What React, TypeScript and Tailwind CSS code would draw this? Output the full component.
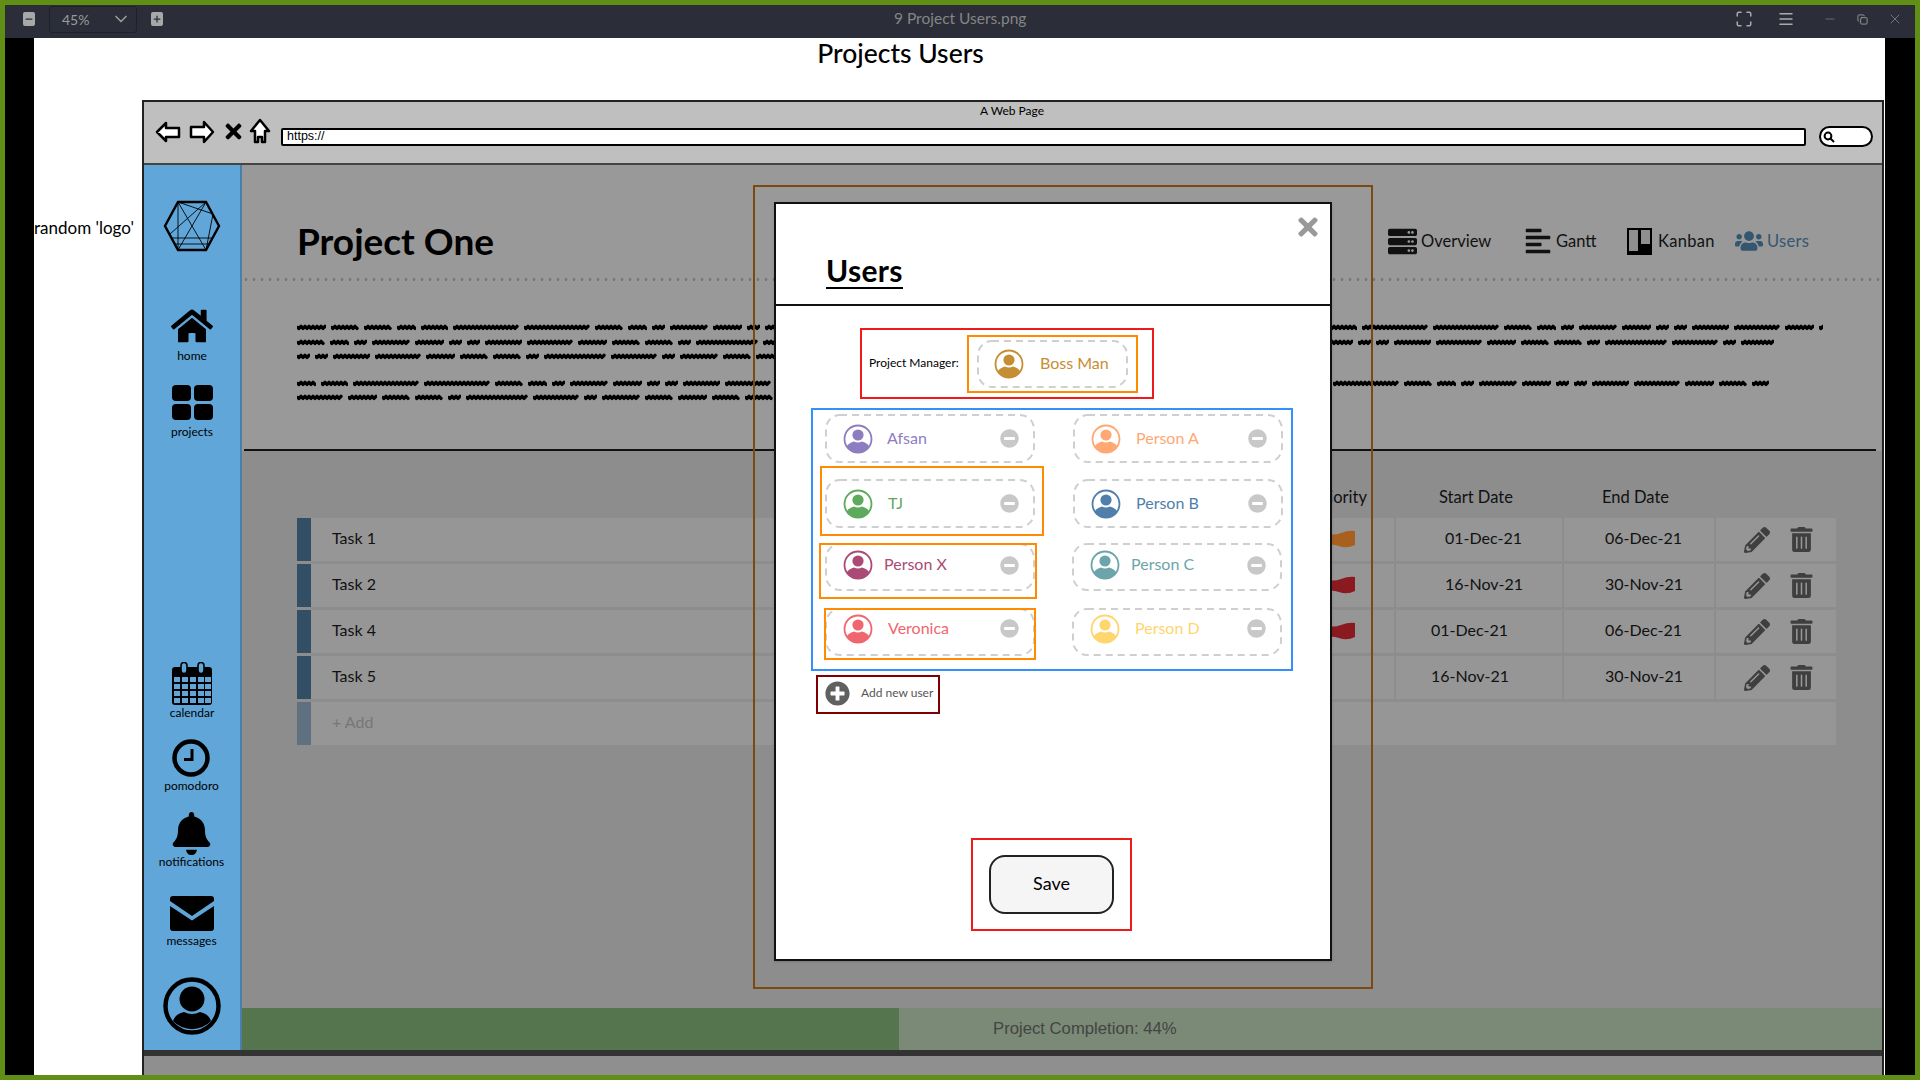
import { FaBell, FaHome, FaMinusCircle, FaPencilAlt, FaPlusCircle, FaTimes, FaTrashAlt, FaUsers, FaAlignLeft, FaServer } from "react-icons/fa";
import { ChevronDown, Copy, Maximize, Menu, Minus, Plus, X } from "lucide-react";

const font = "font-['Lato','Open_Sans',sans-serif]";

const wordWidths = [29, 28, 28, 19, 27, 66, 66, 28, 19, 13, 38, 29, 13, 13, 37, 46, 29, 28, 28, 13, 62, 46, 13, 38, 28];

function Scribble({ width }: { width: number }) {
  let d = "M1 3.5";
  for (let x = 2; x < width; x += 2) {
    d += ` L${x} ${x % 4 === 0 ? 2.4 : 4.4}`;
  }
  return (
    <svg width={width} height={7} className="shrink-0">
      <path d={d} fill="none" stroke="#000" strokeWidth={3.4} strokeLinejoin="round" strokeLinecap="round" />
    </svg>
  );
}

function GreekLine({ width, seed }: { width: number; seed: number }) {
  const words: number[] = [];
  let used = 0;
  let i = seed;
  while (used < width) {
    const w = Math.min(wordWidths[i % wordWidths.length], Math.max(width - used, 6));
    words.push(w);
    used += w + 5;
    i += 1;
  }
  return (
    <div className="flex h-[7px] gap-[5px] overflow-hidden" style={{ width }}>
      {words.map((w, n) => (
        <Scribble key={n} width={w} />
      ))}
    </div>
  );
}

function Avatar({ color }: { color: string }) {
  return (
    <svg width="30" height="30" viewBox="0 0 30 30" className="shrink-0" style={{ color }}>
      <circle cx="15" cy="15" r="13.5" fill="none" stroke="currentColor" strokeWidth="1.8" />
      <circle cx="15" cy="11" r="5.6" fill="currentColor" />
      <path d="M3.5 23 Q5 19 11 17.4 Q15 19.6 19 17.4 Q25 19 26.5 23 A14 14 0 0 1 3.5 23Z" fill="currentColor" />
    </svg>
  );
}

// the sketchy dashed outline of a user card
function DashedBox({ w, h }: { w: number; h: number }) {
  return (
    <svg width={w} height={h} className="absolute top-0 left-0" fill="none">
      <rect x="1" y="1" width={w - 2} height={h - 2} rx="14" stroke="#cfcfcf" strokeWidth="2" strokeDasharray="7 5" />
    </svg>
  );
}

type Person = {
  name: string;
  color: string;
  textClass: string;
  outline?: string;
};

const rows: { mt: string; gap: string; h: number; shift: string; left: Person; right: Person }[] = [
  {
    mt: "mt-[4px]",
    gap: "gap-x-[38px]",
    h: 49,
    shift: "",
    left: { name: "Afsan", color: "#8e7cc3", textClass: "ml-[14px]" },
    right: { name: "Person A", color: "#ffa873", textClass: "ml-[15px]" },
  },
  {
    mt: "mt-[16px]",
    gap: "gap-x-[38px]",
    h: 49,
    shift: "",
    left: {
      name: "TJ",
      color: "#5daa5d",
      textClass: "ml-[15px]",
      outline: "left-[-5px] top-[-13px] w-[224px] h-[70px]",
    },
    right: { name: "Person B", color: "#4f7faa", textClass: "ml-[15px]" },
  },
  {
    mt: "mt-[15px]",
    gap: "gap-x-[37px]",
    h: 48,
    shift: "pb-[4px]",
    left: {
      name: "Person X",
      color: "#ab4a75",
      textClass: "ml-[11px]",
      outline: "left-[-6px] top-0 w-[218px] h-[56px]",
    },
    right: { name: "Person C", color: "#6ba5ab", textClass: "ml-[11px]" },
  },
  {
    mt: "mt-[17px]",
    gap: "gap-x-[37px]",
    h: 48,
    shift: "pb-[7px]",
    left: {
      name: "Veronica",
      color: "#f0666e",
      textClass: "ml-[15px]",
      outline: "left-[-1px] top-0 w-[212px] h-[52px]",
    },
    right: { name: "Person D", color: "#ffd56e", textClass: "ml-[15px]" },
  },
];

function UserCard({ person, h, shift }: { person: Person; h: number; shift: string }) {
  return (
    <div className={`relative flex w-[210px] items-center pr-[16px] pl-[18px] ${shift}`} style={{ height: h }}>
      <DashedBox w={210} h={h} />
      <Avatar color={person.color} />
      <span className={`pb-[2px] text-[16px] ${person.textClass}`} style={{ color: person.color }}>
        {person.name}
      </span>
      <FaMinusCircle className="ml-auto text-[19px] text-[#c8c8c8]" />
      {person.outline && <div className={`absolute border-[2px] border-[#ff8c00] ${person.outline}`} />}
    </div>
  );
}

const tasks = [
  { name: "Task 1", flag: "#a8601f", start: "01-Dec-21", startMl: "ml-[49px]", end: "06-Dec-21" },
  { name: "Task 2", flag: "#8a1a20", start: "16-Nov-21", startMl: "ml-[49px]", end: "30-Nov-21" },
  { name: "Task 4", flag: "#8a1a20", start: "01-Dec-21", startMl: "ml-[35px]", end: "06-Dec-21" },
  { name: "Task 5", flag: "", start: "16-Nov-21", startMl: "ml-[35px]", end: "30-Nov-21" },
];

function Flag({ color }: { color: string }) {
  return (
    <svg width="46" height="20" viewBox="0 0 46 20" fill={color}>
      <path d="M0 4 Q8 0 16 3 T32 3 T46 1 V15 Q38 19 30 16 T14 16 T0 18Z" />
    </svg>
  );
}

function Sidebar() {
  return (
    <aside className="flex w-[98px] shrink-0 flex-col items-center border-r-2 border-[#4a80a8] bg-[#61a6d9] text-black">
      <svg width="58" height="52" viewBox="0 0 58 52" className="mt-[35px]" fill="none" stroke="#000">
        <path d="M15 2 H43 L56 26 L43 50 H15 L2 26Z" strokeWidth="2.4" />
        <path d="M15 2 L43 50 M43 2 L15 50 M15 2 L50 14 M43 2 L7 34 M15 2 V50 M50 14 L43 50 M8 38 H50 M12 44 H46" strokeWidth="0.9" />
      </svg>
      <FaHome className="mt-[53px] text-[42px]" />
      <span className="mt-[1px] text-[12px] leading-[16px]">home</span>
      <div className="mt-[21px] grid grid-cols-2 gap-[3px]">
        {[0, 1, 2, 3].map((n) => (
          <div key={n} className="h-[16px] w-[19px] rounded-[4px] bg-black" />
        ))}
      </div>
      <span className="mt-[4px] text-[12px] leading-[16px]">projects</span>
      <svg width="42" height="44" viewBox="0 0 42 44" className="mt-[222px]">
        <rect x="1" y="5" width="40" height="38" rx="3" fill="#000" />
        <rect x="10" y="0.5" width="6" height="11" rx="3" fill="#61a6d9" stroke="#000" strokeWidth="1.6" />
        <rect x="27" y="0.5" width="6" height="11" rx="3" fill="#61a6d9" stroke="#000" strokeWidth="1.6" />
        {[15, 22, 29, 36].map((y) =>
          [3, 11, 19, 27, 34].map((x) => (
            <rect key={`${x}-${y}`} x={x} y={y} width="6" height="5" fill="#61a6d9" />
          )),
        )}
      </svg>
      <span className="mt-[-1px] text-[12px] leading-[16px]">calendar</span>
      <svg width="38" height="38" viewBox="0 0 38 38" className="mt-[18px] mr-[2px]" fill="none" stroke="#000">
        <circle cx="19" cy="19" r="16.5" strokeWidth="4.5" />
        <path d="M20 10 V20.5 H12" strokeWidth="3" />
      </svg>
      <span className="mt-[1px] mr-[1px] text-[12px] leading-[16px]">pomodoro</span>
      <FaBell className="mt-[18px] mr-[1px] text-[43px]" />
      <span className="mt-[-1px] mr-[1px] text-[12px] leading-[16px]">notifications</span>
      <svg width="44" height="35" viewBox="0 0 44 35" className="mt-[26px] mr-[1px]">
        <path d="M3 0 H41 Q44 0 44 3 V5 L22 20 L0 5 V3 Q0 0 3 0Z" fill="#000" />
        <path d="M0 10 L22 24.5 L44 10 V32 Q44 35 41 35 H3 Q0 35 0 32Z" fill="#000" />
      </svg>
      <span className="mt-[2px] mr-[1px] text-[12px] leading-[16px]">messages</span>
      <svg width="58" height="58" viewBox="0 0 58 58" className="mt-[28px] mr-[1px]">
        <circle cx="29" cy="29" r="26.5" fill="none" stroke="#000" strokeWidth="4.5" />
        <circle cx="29" cy="22" r="12.5" fill="#000" />
        <path d="M10 44 Q12 37 21 35 Q29 39 37 35 Q46 37 48 44 A26 26 0 0 1 10 44Z" fill="#000" />
      </svg>
    </aside>
  );
}

function Nav() {
  return (
    <nav className="flex items-center pr-[72px] text-[16.5px] whitespace-nowrap text-[#111]">
      <FaServer className="text-[29px]" />
      <span className="ml-[4px] w-[67px]">Overview</span>
      <FaAlignLeft className="ml-[36px] text-[28px]" />
      <span className="ml-[4px] w-[40px]">Gantt</span>
      <svg width="25" height="27" viewBox="0 0 25 27" className="ml-[31px]">
        <rect width="25" height="27" fill="#000" />
        <rect x="2" y="2" width="9" height="21" fill="#8f8f8f" />
        <rect x="14" y="2" width="9" height="14" fill="#8f8f8f" />
      </svg>
      <span className="ml-[6px] w-[55px] tracking-[0.3px]">Kanban</span>
      <FaUsers className="ml-[22px] text-[28px] text-[#35566f]" />
      <span className="ml-[4px] w-[43px] tracking-[0.3px] text-[#35566f]">Users</span>
    </nav>
  );
}

function TaskTable() {
  return (
    <div className="flex flex-1 flex-col bg-[#8d8d8d] pr-[46px] pl-[55px]">
      <div className="mt-[34px] flex h-[24px] items-center text-[16.5px] leading-none whitespace-nowrap text-[#111]">
        <span className="ml-auto w-[71px] text-right">Priority</span>
        <span className="ml-[29px] w-[125px] pl-[43px]">Start Date</span>
        <span className="ml-[43px] w-[272px] pl-[38px]">End Date</span>
      </div>
      <div className="mt-[9px] flex flex-col gap-[3px] text-[16px] text-[#111]">
        {tasks.map((t) => (
          <div key={t.name} className="flex h-[43px] items-stretch gap-[2px]">
            <div className="flex flex-1 items-center bg-[#969696]">
              <div className="h-[43px] w-[14px] bg-[#324f66]" />
              <span className="ml-[21px] pb-[4px]">{t.name}</span>
              <div className="ml-auto flex w-[85px]">{t.flag && <Flag color={t.flag} />}</div>
            </div>
            <div className="flex w-[166px] items-center bg-[#969696] pb-[4px]">
              <span className={t.startMl}>{t.start}</span>
            </div>
            <div className="flex w-[150px] items-center bg-[#969696] pb-[4px]">
              <span className="ml-[41px]">{t.end}</span>
            </div>
            <div className="flex w-[120px] items-center bg-[#969696] text-[#3f3f3f]">
              <FaPencilAlt className="ml-[28px] text-[26px]" />
              <FaTrashAlt className="ml-[19px] text-[25px]" />
            </div>
          </div>
        ))}
        <div className="flex h-[43px] items-center bg-[#969696]">
          <div className="h-full w-[14px] bg-[#5f7080]" />
          <span className="ml-[21px] pb-[3px] text-[#777]">+ Add</span>
        </div>
      </div>
      <div className="flex-1" />
    </div>
  );
}

function UsersModal() {
  return (
    <div className="absolute top-[185px] left-[753px] h-[804px] w-[620px] border-2 border-[#7a4a10] pt-[15px] pl-[19px]">
      <div className="relative h-[759px] w-[558px] border-2 border-[#111] bg-white text-black shadow-sm">
        <FaTimes className="absolute top-[9px] right-[8px] text-[28px] text-[#999]" />
        <div className="h-[102px] border-b-2 border-[#111] pt-[49px] pl-[50px]">
          <h2 className="inline-block border-b-2 border-black text-[30px] leading-[34px] font-bold tracking-[0.3px]">Users</h2>
        </div>
        <div className="mt-[22px] ml-[84px] flex h-[71px] w-[294px] items-center border-2 border-[#f01a1a] pl-[7px]">
          <span className="w-[98px] pb-[2px] text-[12px] whitespace-nowrap">Project Manager:</span>
          <div className="flex h-[58px] w-[171px] items-center border-2 border-[#ff8c00] px-[8px]">
            <div className="relative flex h-[48px] w-[151px] items-center pl-[17px]">
              <DashedBox w={151} h={48} />
              <Avatar color="#c68e32" />
              <span className="ml-[16px] pb-[2px] text-[16px] text-[#c68e32]">Boss Man</span>
            </div>
          </div>
        </div>
        <div className="mt-[9px] ml-[35px] h-[263px] w-[482px] border-2 border-[#3390ff] pl-[12px]">
          {rows.map((row) => (
            <div key={row.left.name} className={`flex ${row.mt} ${row.gap}`}>
              <UserCard person={row.left} h={row.h} shift={row.shift} />
              <UserCard person={row.right} h={row.h} shift={row.shift} />
            </div>
          ))}
        </div>
        <div className="mt-[4px] ml-[40px] flex h-[39px] w-[124px] items-center border-2 border-[#7f0000] pb-[2px] pl-[7px]">
          <FaPlusCircle className="text-[25px] text-[#606060]" />
          <span className="ml-[11px] pb-[1px] text-[12px] whitespace-nowrap text-[#555]">Add new user</span>
        </div>
        <div className="mt-[124px] ml-[195px] flex h-[93px] w-[161px] items-center justify-center border-2 border-[#f01a1a]">
          <button className="h-[59px] w-[125px] rounded-[16px] border-2 border-[#222] bg-[#f5f5f5] pb-[2px] text-[18px]">Save</button>
        </div>
      </div>
    </div>
  );
}

export default function App() {
  return (
    <div className={`relative flex h-[1080px] w-[1920px] flex-col overflow-hidden bg-[#618e14] px-[5px] pt-[5px] pb-[5px] ${font}`}>
      <header className="flex h-[33px] shrink-0 items-center bg-[#2b2e38] pb-[5px] text-[#9a9a9a]">
        <div className="ml-[18px] flex h-[14px] w-[12px] items-center justify-center rounded-[2px] bg-[#a8a8a8]">
          <Minus size={10} strokeWidth={3} className="text-[#2b2e38]" />
        </div>
        <div className="ml-[14px] flex h-[27px] w-[88px] items-center rounded-[3px] border border-[#1f2129] pl-[12px] text-[14px]">
          45%
          <ChevronDown size={20} className="mr-[5px] ml-auto" />
        </div>
        <div className="ml-[14px] flex h-[14px] w-[12px] items-center justify-center rounded-[2px] bg-[#a8a8a8]">
          <Plus size={10} strokeWidth={3} className="text-[#2b2e38]" />
        </div>
        <span className="ml-[731px] text-[15.5px] text-[#858585]">9 Project Users.png</span>
        <Maximize size={18} className="ml-[709px] text-[#aaa]" />
        <Menu size={18} className="ml-[24px] text-[#aaa]" />
        <Minus size={14} strokeWidth={1} className="ml-[28px]" />
        <Copy size={11} className="ml-[20px]" />
        <X size={16} strokeWidth={1} className="ml-[19px]" />
      </header>

      <div className="flex min-h-0 flex-1 bg-black pr-[30px] pl-[29px]">
        <div className="flex min-w-0 flex-1 flex-col bg-white">
          <h1 className="h-[62px] pr-[118px] text-center text-[26.5px] leading-[30px] font-medium text-black">Projects Users</h1>
          <div className="flex min-h-0 flex-1">
            <div className="w-[108px] shrink-0 pt-[115px] text-[17px] whitespace-nowrap text-black">random 'logo'</div>
            <div className="flex min-w-0 flex-1 flex-col border-x-2 border-t-2 border-[#222]">
              <div className="relative flex h-[63px] shrink-0 items-center border-b-2 border-[#444] bg-[#bfbfbf] pl-[11px]">
                <span className="absolute top-0 left-[836px] text-[12px] text-black">A Web Page</span>
                <svg width="26" height="22" viewBox="0 0 26 22" className="mt-[-2px]" fill="#fff" stroke="#000" strokeWidth="2.5" strokeLinejoin="round">
                  <path d="M2 11 L11 2 V7 H24 V16 H11 V20Z" />
                </svg>
                <svg width="26" height="24" viewBox="0 0 26 24" className="mt-[-2px] ml-[8px]" fill="#fff" stroke="#000" strokeWidth="2.5" strokeLinejoin="round">
                  <path d="M24 12 L15 2 V7 H2 V17 H15 V22Z" />
                </svg>
                <FaTimes className="mt-[-3px] ml-[7px] text-[23px] text-black" />
                <svg width="22" height="26" viewBox="0 0 22 26" className="mt-[-4px] ml-[4px]" fill="#fff" stroke="#000" strokeWidth="2.5" strokeLinejoin="round">
                  <path d="M11 2 L20 13 H16 V24 H13 V19 H9 V24 H6 V13 H2Z" />
                </svg>
                <div className="mt-[8px] ml-[10px] flex h-[18px] w-[1525px] items-center rounded-[2px] border-2 border-black bg-white pl-[4px] font-['Liberation_Sans'] text-[12.5px] text-black">
                  https://
                </div>
                <div className="mt-[8px] ml-[13px] flex h-[21px] w-[54px] items-center rounded-full border-2 border-black bg-white pl-[2px]">
                  <svg width="12" height="12" viewBox="0 0 12 12" fill="none" stroke="#000" strokeWidth="2">
                    <circle cx="5" cy="5" r="3.4" />
                    <path d="M7.5 7.5 L11 11" />
                  </svg>
                </div>
              </div>

              <div className="flex min-h-0 flex-1">
                <Sidebar />
                <main className="flex min-w-0 flex-1 flex-col">
                  <div className="flex h-[286px] shrink-0 flex-col bg-[#999]">
                    <div className="flex h-[113px] items-center justify-between pt-[39px]">
                      <h2 className="ml-[55px] text-[37px] font-bold text-black">Project One</h2>
                      <Nav />
                    </div>
                    <div className="h-[3px] bg-[radial-gradient(circle,#777_1.3px,transparent_1.6px)] bg-[length:8px_3px]" />
                    <div className="mt-[43px] ml-[55px] flex flex-col gap-[7.5px]">
                      <GreekLine width={1526} seed={0} />
                      <GreekLine width={1477} seed={7} />
                      <GreekLine width={700} seed={12} />
                      <div className="mt-[12px]">
                        <GreekLine width={1472} seed={3} />
                      </div>
                      <GreekLine width={700} seed={15} />
                    </div>
                    <div className="mt-auto mr-[6px] ml-[2px] h-[2px] bg-[#111]" />
                  </div>
                  <TaskTable />
                  <div className="flex h-[42px] shrink-0 bg-[#7a8a76]">
                    <div className="w-[657px] bg-[#55754f]" />
                    <span className="ml-[94px] self-center font-['Liberation_Sans'] text-[16.7px] text-[#444]">Project Completion: 44%</span>
                  </div>
                </main>
              </div>
              <div className="h-[25px] shrink-0 border-t-[6px] border-[#333] bg-[#8f8f8f]" />
            </div>
            <div className="w-[1px] shrink-0" />
          </div>
        </div>
      </div>
      <UsersModal />
    </div>
  );
}
